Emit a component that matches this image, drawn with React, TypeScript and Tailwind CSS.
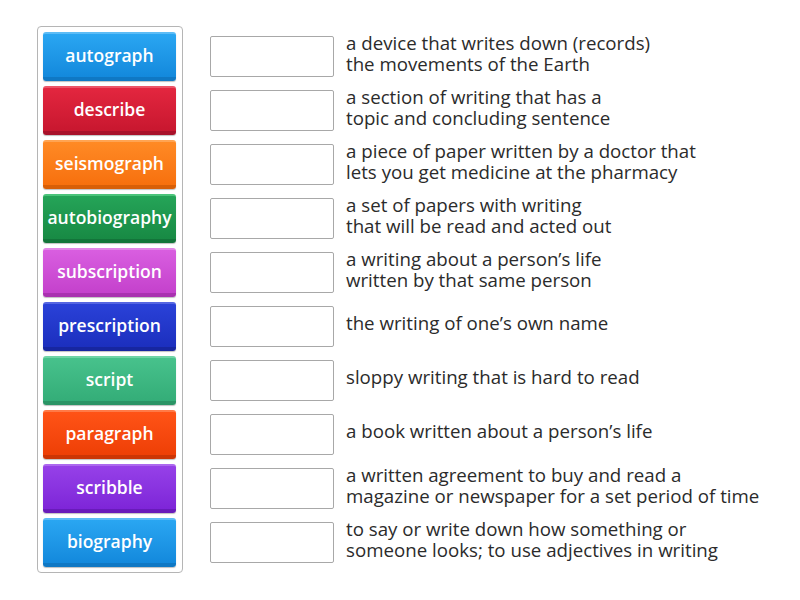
const TILES = [
  { word: "autograph", cls: "bg-gradient-to-b from-[#2aa6f2] to-[#1389dc] border-t-[#5cbcf6] border-b-[#0f78c4]" },
  { word: "describe", cls: "bg-gradient-to-b from-[#e3263f] to-[#c8172f] border-t-[#ec5468] border-b-[#a8112a]" },
  { word: "seismograph", cls: "bg-gradient-to-b from-[#ff8a24] to-[#f7700d] border-t-[#ffa452] border-b-[#d85f07]" },
  { word: "autobiography", cls: "bg-gradient-to-b from-[#25a458] to-[#188a44] border-t-[#4cc47a] border-b-[#13743a]" },
  { word: "subscription", cls: "bg-gradient-to-b from-[#d95ee0] to-[#c441cc] border-t-[#e286e8] border-b-[#a931b0]" },
  { word: "prescription", cls: "bg-gradient-to-b from-[#2a41d8] to-[#1c2fbe] border-t-[#5566e2] border-b-[#1726a0]" },
  { word: "script", cls: "bg-gradient-to-b from-[#47c28c] to-[#34ad78] border-t-[#6fd4a6] border-b-[#2b9465]" },
  { word: "paragraph", cls: "bg-gradient-to-b from-[#ff5316] to-[#ee3f06] border-t-[#ff7a47] border-b-[#cc3505]" },
  { word: "scribble", cls: "bg-gradient-to-b from-[#9640e8] to-[#7e25d8] border-t-[#ad68ee] border-b-[#691bba]" },
  { word: "biography", cls: "bg-gradient-to-b from-[#2aa6f2] to-[#1389dc] border-t-[#5cbcf6] border-b-[#0f78c4]" },
];

const CLUES: string[][] = [
  ["a device that writes down (records)", "the movements of the Earth"],
  ["a section of writing that has a", "topic and concluding sentence"],
  ["a piece of paper written by a doctor that", "lets you get medicine at the pharmacy"],
  ["a set of papers with writing", "that will be read and acted out"],
  ["a writing about a person\u2019s life", "written by that same person"],
  ["the writing of one\u2019s own name"],
  ["sloppy writing that is hard to read"],
  ["a book written about a person\u2019s life"],
  ["a written agreement to buy and read a", "magazine or newspaper for a set period of time"],
  ["to say or write down how something or", "someone looks; to use adjectives in writing"],
];

export default function App() {
  return (
    <div
      className="w-[800px] h-[600px] bg-white flex items-start pt-[26px] pl-[37px]"
      style={{ fontFamily: '"Open Sans", "Noto Sans", sans-serif' }}
    >
      {/* Word bank */}
      <div className="w-[146px] border border-[#b5b5b5] rounded-[4px] p-[5px] flex flex-col gap-[5px]">
        {TILES.map((t) => (
          <div
            key={t.word}
            className={`h-[49px] w-[133px] rounded-[3px] border-t-[2px] border-b-[4px] flex items-center justify-center text-white font-semibold text-[17.5px] shadow-[0_1px_1px_rgba(0,0,0,0.25)] ${t.cls}`}
          >
            {t.word}
          </div>
        ))}
      </div>

      {/* Drop targets + definitions */}
      <div className="flex flex-col gap-[5px] pt-[6px] ml-[27px]">
        {CLUES.map((lines, i) => (
          <div key={i} className="h-[49px] flex items-center">
            <div className="w-[124px] h-[41px] border border-[#a8a8a8] rounded-[2px] bg-white shrink-0" />
            <div className="ml-[12px] -mt-[8px] text-[18.7px] leading-[21px] text-[#2b2b2b] whitespace-nowrap">
              {lines.map((l) => (
                <div key={l}>{l}</div>
              ))}
            </div>
          </div>
        ))}
      </div>
    </div>
  );
}
